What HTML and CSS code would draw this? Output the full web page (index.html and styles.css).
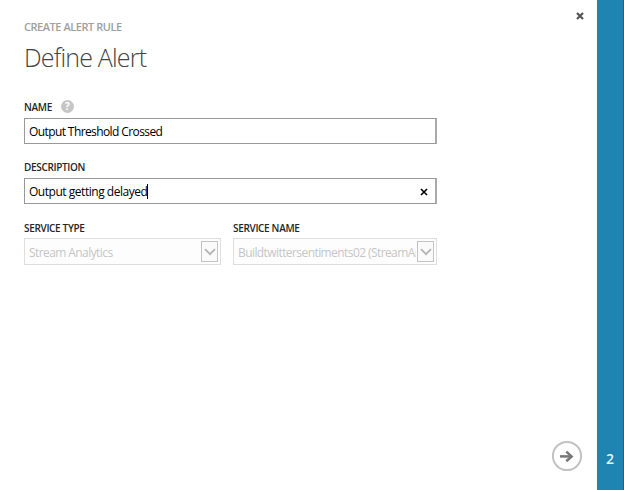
FILE: index.html
```
<!DOCTYPE html>
<html lang="en">
<head>
<meta charset="utf-8">
<title>Define Alert</title>
<link rel="stylesheet" href="styles.css">
</head>
<body>
<div class="wizard">
  <main class="page">
    <button class="close" aria-label="Close"><svg width="8" height="8" viewBox="0 0 8 8"><path d="M1 1L7 7M7 1L1 7"/></svg></button>
    <p class="eyebrow">CREATE ALERT RULE</p>
    <h1>Define Alert</h1>
    <form class="form">
      <div class="field">
        <div class="label">NAME<span class="help">?</span></div>
        <div class="input"><span class="v-name">Output Threshold Crossed</span></div>
      </div>
      <div class="field">
        <div class="label">DESCRIPTION</div>
        <div class="input"><span class="v-desc">Output getting delayed</span><i class="caret"></i><svg class="clear" width="8" height="8" viewBox="0 0 8 8"><path d="M1 1L7 7M7 1L1 7"/></svg></div>
      </div>
      <div class="row">
        <div class="field">
          <div class="label">SERVICE TYPE</div>
          <div class="select"><span class="value">Stream Analytics</span><span class="drop"><svg width="12" height="8" viewBox="0 0 12 8"><path d="M1 1.2L6 6.2L11 1.2"/></svg></span></div>
        </div>
        <div class="field">
          <div class="label">SERVICE NAME</div>
          <div class="select"><span class="value">Buildtwittersentiments02 (StreamAn</span><span class="drop"><svg width="12" height="8" viewBox="0 0 12 8"><path d="M1 1.2L6 6.2L11 1.2"/></svg></span></div>
        </div>
      </div>
    </form>
    <button class="next" aria-label="Next"><svg width="32" height="32" viewBox="0 0 32 32"><circle cx="16" cy="16" r="14.1"/><path d="M9 16.4H20"/><path d="M15.3 11.6L20.6 16.4L15.3 21.2"/></svg></button>
  </main>
  <aside class="step">2</aside>
</div>
</body>
</html>
```
FILE: styles.css
```
* { box-sizing: border-box; }
body { margin: 0; background: #fff; font-family: "Open Sans", "Noto Sans", sans-serif; color: #111; overflow: hidden; }
button { border: 0; padding: 0; background: none; display: block; }
svg { display: block; fill: none; }
.wizard { display: flex; width: 624px; height: 490px; }
.page { position: relative; flex: 1; padding: 19px 0 0 24px; }
.step { width: 27px; background: #1f84b1; border-right: 1px solid #176489; color: #e6f3fa; font-size: 14px; line-height: 20px; font-weight: 600; text-align: center; padding-top: 449px; }
.close { position: absolute; left: 576px; top: 12px; }
.close path { stroke: #555; stroke-width: 2.2; }
.next { position: absolute; left: 551px; top: 440px; }
.next circle { stroke: #c2c2c2; stroke-width: 2; }
.next path { stroke: #777; stroke-width: 2.5; }
.eyebrow { margin: 0; height: 16px; font-size: 11px; line-height: 16px; font-weight: 600; color: #a0a0a0; letter-spacing: -.46px; }
h1 { margin: 4px 0 0; height: 36px; font-size: 25px; line-height: 36px; font-weight: 300; color: #444; letter-spacing: -.82px; white-space: nowrap; }
.form { width: 413px; margin-top: 22px; }
.label { display: flex; align-items: center; height: 20px; margin-bottom: 1px; font-size: 10px; font-weight: 600; color: #262626; white-space: nowrap; letter-spacing: -.33px; }
.help { width: 13px; height: 13px; margin: -2px 0 0 9px; border-radius: 50%; background: #c6c6c6; color: #fff; font-size: 10px; line-height: 13px; font-weight: 700; text-align: center; letter-spacing: 0; }
.input { display: flex; align-items: center; height: 26px; border: 1px solid #999; border-right-width: 2px; border-right-color: #aaa; padding: 1px 7px 0 4px; font-size: 12px; line-height: 16px; white-space: nowrap; margin-bottom: 13px; color: #000; }
.v-name { letter-spacing: -.6px; }
.v-desc { letter-spacing: -.47px; }
.caret { width: 1px; height: 15px; background: #000; }
.clear { margin-left: auto; }
.clear path { stroke: #000; stroke-width: 1.6; }
.row { display: grid; grid-template-columns: 197px 204px; gap: 12px; margin-top: 1px; }
.row .label { height: 20px; padding-top: 2px; }
.select { display: flex; align-items: center; height: 27px; border: 1px solid #dedede; background: #fdfdfd; padding: 0 2px 0 4px; font-size: 12px; color: #c6c6c6; }
.value { flex: 1; min-width: 0; margin-right: 1px; padding-top: 1px; overflow: hidden; white-space: nowrap; letter-spacing: -.58px; }
.drop { display: flex; align-items: center; justify-content: center; width: 17px; height: 21px; border: 1px solid #c4c4c4; background: #fafafa; }
.drop path { stroke: #b5b5b5; stroke-width: 1.8; }
```
